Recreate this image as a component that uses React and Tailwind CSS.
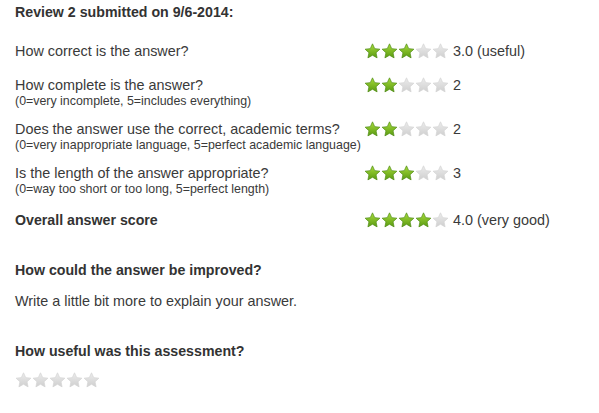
import { useId } from "react";

const rows = [
  { q: "How correct is the answer?", stars: 3, label: "3.0 (useful)" },
  {
    q: "How complete is the answer?",
    hint: "(0=very incomplete, 5=includes everything)",
    stars: 2,
    label: "2",
  },
  {
    q: "Does the answer use the correct, academic terms?",
    hint: "(0=very inappropriate language, 5=perfect academic language)",
    stars: 2,
    label: "2",
  },
  {
    q: "Is the length of the answer appropriate?",
    hint: "(0=way too short or too long, 5=perfect length)",
    stars: 3,
    label: "3",
  },
];

function Star({ on }) {
  const id = useId();
  return (
    <svg width="17" height="16" viewBox="0 0 24 23" className="block">
      <defs>
        <linearGradient id={id} x1="0" y1="0" x2="0" y2="1">
          {on ? (
            <>
              <stop offset="0" stopColor="#a8dc3c" />
              <stop offset="1" stopColor="#5a9a12" />
            </>
          ) : (
            <>
              <stop offset="0" stopColor="#ececec" />
              <stop offset="1" stopColor="#cfcfcf" />
            </>
          )}
        </linearGradient>
      </defs>
      <path
        d="M12 1.2l3.2 6.9 7.4.8-5.5 5.1 1.5 7.4L12 17.6l-6.6 3.8 1.5-7.4-5.5-5.1 7.4-.8z"
        fill={`url(#${id})`}
        stroke={on ? "#4d8a12" : "#d4d4d4"}
        strokeWidth="1"
        strokeLinejoin="round"
      />
    </svg>
  );
}

function Stars({ n }) {
  return (
    <div className="flex">
      {[0, 1, 2, 3, 4].map((i) => (
        <Star key={i} on={i < n} />
      ))}
    </div>
  );
}

export default function App() {
  return (
    <div
      className="w-[599px] h-[413px] bg-white text-[#3a3a3a] pl-[15px] pt-[4px]"
      style={{ fontFamily: '"Liberation Sans", Arial, sans-serif' }}
    >
      <h1 className="text-[14.2px] leading-[16px] font-bold text-[#333]">
        Review 2 submitted on 9/6-2014:
      </h1>

      <div className="mt-[23px] flex flex-col gap-[13px]">
        {rows.map((r, i) => (
          <div key={r.q} className={i === 0 ? "flex mb-[4px]" : "flex"}>
            <div className="w-[349px]">
              <div className="text-[14.4px] leading-[17px]">{r.q}</div>
              {r.hint && (
                <div className="text-[12.4px] leading-[14px]">{r.hint}</div>
              )}
            </div>
            <div className="flex items-start gap-[4px]">
              <Stars n={r.stars} />
              <span className="text-[14.4px] leading-[17px]">{r.label}</span>
            </div>
          </div>
        ))}
        <div className="flex mt-[3px]">
          <div className="w-[349px] text-[14.2px] leading-[17px] font-bold text-[#333]">
            Overall answer score
          </div>
          <div className="flex items-start gap-[4px]">
            <Stars n={4} />
            <span className="text-[14.4px] leading-[17px]">4.0 (very good)</span>
          </div>
        </div>
      </div>

      <h2 className="mt-[33px] text-[14.2px] leading-[17px] font-bold text-[#333]">
        How could the answer be improved?
      </h2>
      <p className="mt-[14px] text-[14.4px] leading-[17px]">
        Write a little bit more to explain your answer.
      </p>

      <h2 className="mt-[33px] text-[14.2px] leading-[17px] font-bold text-[#333]">
        How useful was this assessment?
      </h2>
      <div className="mt-[12px]">
        <Stars n={0} />
      </div>
    </div>
  );
}
